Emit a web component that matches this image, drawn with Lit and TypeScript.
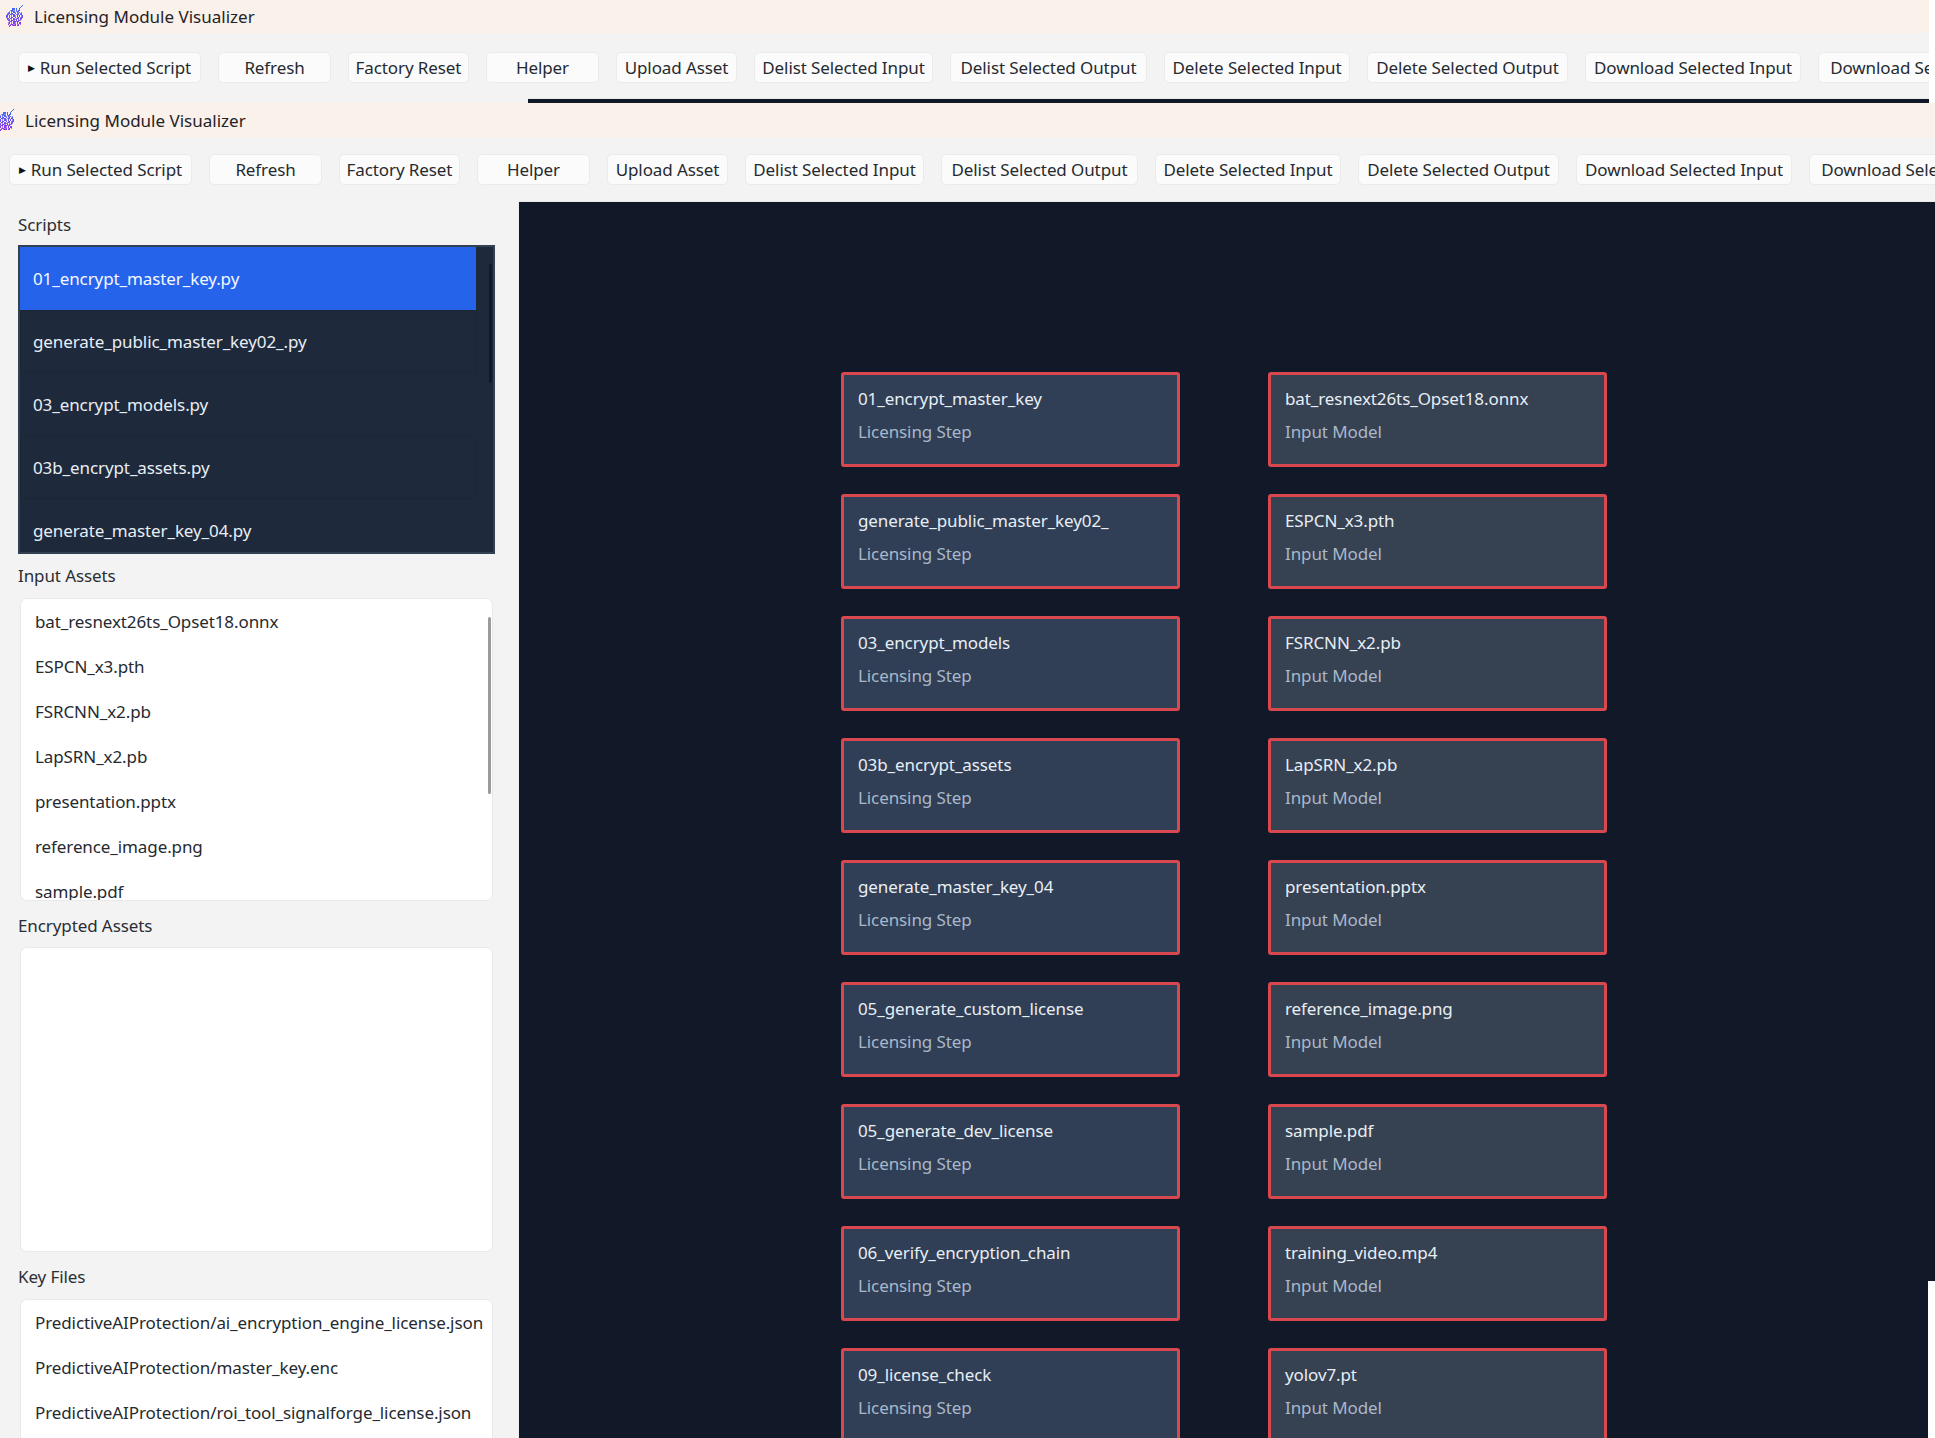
import { LitElement, html, css, svg } from "lit";
import { customElement } from "lit/decorators.js";

const BUTTONS: [string, number][] = [
  ["Run Selected Script", 183],
  ["Refresh", 113],
  ["Factory Reset", 121],
  ["Helper", 113],
  ["Upload Asset", 121],
  ["Delist Selected Input", 179],
  ["Delist Selected Output", 197],
  ["Delete Selected Input", 186],
  ["Delete Selected Output", 201],
  ["Download Selected Input", 216],
  ["Download Selected Output", 236],
];

const SCRIPTS = [
  "01_encrypt_master_key.py",
  "generate_public_master_key02_.py",
  "03_encrypt_models.py",
  "03b_encrypt_assets.py",
  "generate_master_key_04.py",
];

const INPUTS = [
  "bat_resnext26ts_Opset18.onnx",
  "ESPCN_x3.pth",
  "FSRCNN_x2.pb",
  "LapSRN_x2.pb",
  "presentation.pptx",
  "reference_image.png",
  "sample.pdf",
];

const KEYS = [
  "PredictiveAIProtection/ai_encryption_engine_license.json",
  "PredictiveAIProtection/master_key.enc",
  "PredictiveAIProtection/roi_tool_signalforge_license.json",
];

const STEPS = [
  "01_encrypt_master_key",
  "generate_public_master_key02_",
  "03_encrypt_models",
  "03b_encrypt_assets",
  "generate_master_key_04",
  "05_generate_custom_license",
  "05_generate_dev_license",
  "06_verify_encryption_chain",
  "09_license_check",
];

const MODELS = [
  "bat_resnext26ts_Opset18.onnx",
  "ESPCN_x3.pth",
  "FSRCNN_x2.pb",
  "LapSRN_x2.pb",
  "presentation.pptx",
  "reference_image.png",
  "sample.pdf",
  "training_video.mp4",
  "yolov7.pt",
];

const LOGO = [
  "................#.",
  "...............#..",
  "..............#...",
  ".......##.#..#....",
  ".....####.#.##....",
  "....#.###.###.....",
  "...##.#.##.###.#..",
  "..###.##.#.##.##..",
  "..##.####.###.##..",
  ".##.#.#.##.#.#.##.",
  ".##.#.##.#.##.###.",
  "..##.##.#.###.##..",
  "..###.#.###.#.##..",
  "...##.###.#.###...",
  "....###.#####.....",
  "...##.#.##.#.##...",
  "...#.#####.##.#...",
  "....##.###.##.....",
  "....#.............",
];

function logo() {
  const cells = LOGO.flatMap((row, y) =>
    [...row].map((c, x) => {
      if (c !== "#") return null;
      const t = y / (LOGO.length - 1);
      const r = Math.round(50 + 100 * t);
      const g = Math.round(115 - 65 * t);
      const b = Math.round(246 - 15 * t);
      return svg`<rect x=${x} y=${y} width="1" height="1" fill=${`rgb(${r},${g},${b})`} opacity=${(x + y) % 3 === 0 ? 0.65 : 1}></rect>`;
    })
  );
  return html`<svg class="logo" viewBox="0 0 18 19" width="19" height="22" preserveAspectRatio="none" shape-rendering="crispEdges">${cells}</svg>`;
}

@customElement("app-root")
export class AppRoot extends LitElement {
  static styles = css`
    :host {
      display: block;
      width: 1935px;
      height: 1438px;
      overflow: hidden;
      position: relative;
      background: #ffffff;
      font-family: "Noto Sans", "Open Sans", sans-serif;
      font-size: 17px;
      letter-spacing: -0.1px;
      color: #1f2328;
    }
    .back {
      width: 1929px;
      height: 103px;
      overflow: hidden;
      background: #f3f3f3;
    }
    .front {
      width: 1944px;
      height: 1335px;
      margin-left: -9px;
      background: #f3f3f3;
      display: flex;
      flex-direction: column;
      overflow: hidden;
    }
    .title {
      display: flex;
      align-items: center;
      flex: none;
      background: #f9f1ea;
      font-size: 17px;
      letter-spacing: 0;
      padding-left: 5px;
      gap: 10px;
    }
    .back .title { height: 33px; }
    .front .title { height: 34px; }
    .logo { flex: none; margin-top: -1px; }
    .toolbar {
      display: flex;
      gap: 17px;
      flex: none;
      padding-left: 18px;
      white-space: nowrap;
      box-sizing: border-box;
    }
    .back .toolbar { height: 65px; padding-top: 19px; }
    .front .toolbar { height: 64px; padding-top: 17px; }
    .btn {
      flex: none;
      box-sizing: border-box;
      height: 31px;
      background: #fbfbfb;
      border: 1px solid #ebebeb;
      border-radius: 5px;
      display: flex;
      align-items: center;
      justify-content: center;
      gap: 5px;
      color: #262a30;
    }
    .arrow {
      font-family: "DejaVu Sans", sans-serif;
      font-size: 9px;
      color: #111;
    }
    .backrest { display: flex; height: 5px; }
    .back-dark {
      margin-left: 528px;
      flex: 1;
      background: #111827;
      border-top: 1px solid #e9e9e9;
    }
    .body {
      flex: 1;
      display: flex;
      min-height: 0;
    }
    .side {
      flex: none;
      width: 528px;
      box-sizing: border-box;
      padding: 13px 23px 0 27px;
      border-right: 1px solid #ebebeb;
      overflow: hidden;
    }
    .label {
      height: 22px;
      line-height: 22px;
      margin: 14px 0 10px;
      color: #2a2e34;
    }
    .label.first { margin: 0 0 9px; }
    .label.tight { margin: 11px 0 11px; }
    .label.last { margin: 14px 0 11px; }
    .scripts {
      position: relative;
      box-sizing: border-box;
      width: 477px;
      height: 309px;
      border: 2px solid #334155;
      background: #1e293b;
      overflow: hidden;
    }
    .script {
      box-sizing: border-box;
      width: 456px;
      height: 63px;
      padding-left: 12px;
      display: flex;
      align-items: center;
      color: #e8eef5;
      border: 1px solid transparent;
    }
    .script:nth-child(even) { border-color: #1b2534; }
    .script.sel { background: #2563eb; color: #f5f8ff; border-color: #2563eb; }
    .thumb-dark {
      position: absolute;
      left: 469px;
      top: 17px;
      width: 3px;
      height: 119px;
      border-radius: 2px;
      background: #111a27;
    }
    .list {
      position: relative;
      box-sizing: border-box;
      width: 473px;
      margin-left: 2px;
      background: #fff;
      border: 1px solid #e9e9e9;
      border-radius: 7px;
      overflow: hidden;
    }
    .inputs { height: 303px; }
    .encrypted { height: 305px; }
    .keys { height: 200px; }
    .row {
      height: 45px;
      display: flex;
      align-items: center;
      padding-left: 14px;
      white-space: nowrap;
      color: #262a30;
    }
    .thumb-light {
      position: absolute;
      left: 467px;
      top: 18px;
      width: 3px;
      height: 177px;
      border-radius: 2px;
      background: #9b9b9b;
    }
    .canvas {
      flex: 1;
      min-width: 0;
      background: #111827;
      border-top: 1px solid #e9e9e9;
      padding: 170px 0 0 322px;
      overflow: hidden;
      display: grid;
      grid-template-columns: 339px 339px;
      grid-auto-rows: 95px;
      column-gap: 88px;
      row-gap: 27px;
      align-content: start;
    }
    .card {
      box-sizing: border-box;
      border: 3px solid #d9484e;
      border-radius: 3px;
      padding-left: 14px;
      display: flex;
      flex-direction: column;
      background: #303f56;
    }
    .card.model { background: #364152; }
    .name {
      margin-top: 12px;
      height: 24px;
      line-height: 24px;
      color: #e8eef5;
    }
    .sub {
      margin-top: 9px;
      height: 24px;
      line-height: 24px;
      color: #a9b8c9;
    }
    .strip {
      position: absolute;
      left: 1928px;
      top: 1281px;
      width: 7px;
      height: 157px;
      background: #fff;
    }
  `;

  private toolbar() {
    return html`<div class="toolbar">
      ${BUTTONS.map(
        ([t, w], i) => html`<div class="btn" style="width:${w}px">
          ${i === 0 ? html`<span class="arrow">▶</span>` : ""}<span>${t}</span>
        </div>`
      )}
    </div>`;
  }

  private title() {
    return html`<div class="title">${logo()}<span>Licensing Module Visualizer</span></div>`;
  }

  render() {
    return html`
      <div class="back">
        ${this.title()} ${this.toolbar()}
        <div class="backrest"><div class="back-dark"></div></div>
      </div>
      <div class="front">
        ${this.title()} ${this.toolbar()}
        <div class="body">
          <div class="side">
            <div class="label first">Scripts</div>
            <div class="scripts">
              ${SCRIPTS.map(
                (s, i) => html`<div class="script ${i === 0 ? "sel" : ""}">${s}</div>`
              )}
              <div class="thumb-dark"></div>
            </div>
            <div class="label tight">Input Assets</div>
            <div class="list inputs">
              ${INPUTS.map((s) => html`<div class="row">${s}</div>`)}
              <div class="thumb-light"></div>
            </div>
            <div class="label">Encrypted Assets</div>
            <div class="list encrypted"></div>
            <div class="label last">Key Files</div>
            <div class="list keys">
              ${KEYS.map((s) => html`<div class="row">${s}</div>`)}
            </div>
          </div>
          <div class="canvas">
            ${STEPS.map(
              (s, i) => html`
                <div class="card"><div class="name">${s}</div><div class="sub">Licensing Step</div></div>
                <div class="card model"><div class="name">${MODELS[i]}</div><div class="sub">Input Model</div></div>
              `
            )}
          </div>
        </div>
      </div>
      <div class="strip"></div>
    `;
  }
}
